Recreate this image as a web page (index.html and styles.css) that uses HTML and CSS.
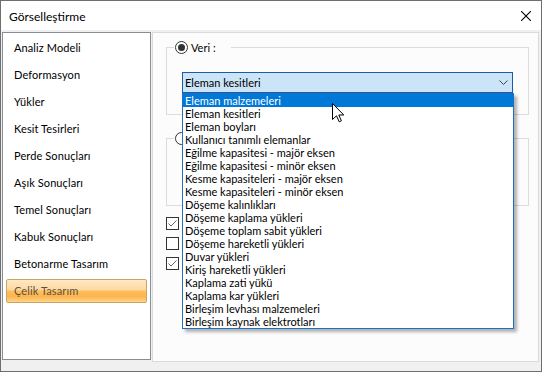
FILE: index.html
```html
<!DOCTYPE html>
<html lang="tr">
<head>
<meta charset="utf-8">
<title>Görselleştirme</title>
<link rel="stylesheet" href="styles.css">
</head>
<body>
<div class="window">
  <div class="titlebar">
    <span class="title">Görselleştirme</span>
    <svg class="close" width="10" height="10" viewBox="0 0 10 10"><path d="M0 0 L10 10 M10 0 L0 10" stroke="#000" stroke-width="1.1" fill="none"/></svg>
  </div>
  <div class="body">
    <ul class="nav">
      <li class="nav-item">Analiz Modeli</li>
      <li class="nav-item">Deformasyon</li>
      <li class="nav-item">Yükler</li>
      <li class="nav-item">Kesit Tesirleri</li>
      <li class="nav-item">Perde Sonuçları</li>
      <li class="nav-item">Aşık Sonuçları</li>
      <li class="nav-item">Temel Sonuçları</li>
      <li class="nav-item">Kabuk Sonuçları</li>
      <li class="nav-item">Betonarme Tasarım</li>
      <li class="nav-item active">Çelik Tasarım</li>
    </ul>
    <div class="page">
      <div class="group group-data">
        <div class="legend">
          <span class="radio checked"></span>
          <span class="legend-text">Veri :</span>
        </div>
        <div class="combo">
          <span class="combo-text">Eleman kesitleri</span>
          <svg class="chevron" width="9" height="5" viewBox="0 0 9 5"><polyline points="0.5,0.5 4.5,4.5 8.5,0.5" fill="none" stroke="#444" stroke-width="1"/></svg>
          <ul class="dropdown">
            <li class="opt selected">Eleman malzemeleri</li>
            <li class="opt">Eleman kesitleri</li>
            <li class="opt">Eleman boyları</li>
            <li class="opt">Kullanıcı tanımlı elemanlar</li>
            <li class="opt">Eğilme kapasitesi - majör eksen</li>
            <li class="opt">Eğilme kapasitesi - minör eksen</li>
            <li class="opt">Kesme kapasiteleri - majör eksen</li>
            <li class="opt">Kesme kapasiteleri - minör eksen</li>
            <li class="opt">Döşeme kalınlıkları</li>
            <li class="opt">Döşeme kaplama yükleri</li>
            <li class="opt">Döşeme toplam sabit yükleri</li>
            <li class="opt">Döşeme hareketli yükleri</li>
            <li class="opt">Duvar yükleri</li>
            <li class="opt">Kiriş hareketli yükleri</li>
            <li class="opt">Kaplama zati yükü</li>
            <li class="opt">Kaplama kar yükleri</li>
            <li class="opt">Birleşim levhası malzemeleri</li>
            <li class="opt">Birleşim kaynak elektrotları</li>
          </ul>
        </div>
      </div>
      <div class="group group-other">
        <div class="legend">
          <span class="radio"></span>
        </div>
      </div>
      <div class="checks">
        <span class="check"><svg width="11" height="11" viewBox="0 0 11 11"><polyline points="1.5,5.5 4,8 9.5,2.5" fill="none" stroke="#666" stroke-width="1"/></svg></span>
        <span class="check"></span>
        <span class="check"><svg width="11" height="11" viewBox="0 0 11 11"><polyline points="1.5,5.5 4,8 9.5,2.5" fill="none" stroke="#666" stroke-width="1"/></svg></span>
      </div>
      <svg class="cursor" width="13" height="20" viewBox="0 0 13 20"><path d="M0.5 0.5 L0.5 16.5 L4.5 12.8 L7.2 18.8 L9.4 17.8 L6.8 12 L11.8 12 Z" fill="#fff" stroke="#000" stroke-width="1" stroke-linejoin="miter"/></svg>
    </div>
  </div>
</div>
</body>
</html>
```

FILE: styles.css
```css
* { box-sizing: border-box; }
html, body { margin: 0; padding: 0; }
body {
  width: 542px;
  height: 372px;
  font-family: Lato, "Liberation Sans", Arial, sans-serif;
  font-size: 11px;
  color: #000;
  background: #f0f0f0;
}
.window {
  width: 542px;
  height: 372px;
  border: 1px solid #6e6e6e;
  background: #f0f0f0;
  display: flex;
  flex-direction: column;
}
.titlebar {
  height: 29px;
  background: #fff;
  display: flex;
  align-items: center;
  justify-content: space-between;
  padding: 1px 10px 0 8px;
  flex: none;
}
.title { font-size: 12px; }
.close { display: block; margin-top: -1px; }
.body {
  flex: 1;
  display: flex;
  align-items: flex-start;
  gap: 1px;
  padding: 2px 2px 0 1px;
}
.nav {
  list-style: none;
  margin: 0;
  padding: 3px 3px 0 3px;
  width: 149px;
  height: 328px;
  background: #fff;
  border: 1px solid #8a8d92;
  display: flex;
  flex-direction: column;
  gap: 3px;
}
.nav-item {
  height: 24px;
  line-height: 22px;
  padding-left: 7px;
  border: 1px solid transparent;
  color: #000;
  font-size: 11px;
  letter-spacing: 0.1px;
}
.nav-item.active {
  border-color: #c9a664;
  border-radius: 2px;
  color: #5e5040;
  background: linear-gradient(to bottom, #ffe8c4 0%, #fed9a0 45%, #fdbf5c 50%, #fdb550 75%, #ffd488 100%);
}
.page {
  position: relative;
  width: 387px;
  height: 330px;
  background: #fcfcfc;
  border: 1px solid #dadada;
  padding: 14px 9px 0 13px;
}
.group {
  position: relative;
  height: 68px;
  border: 1px solid #dcdcdc;
}
.group-other { margin-top: 23px; }
.legend {
  position: absolute;
  top: -7px;
  left: 7px;
  width: 57px;
  height: 13px;
  display: flex;
  align-items: center;
  gap: 3px;
  padding-left: 1px;
  background: #fcfcfc;
}
.group-other .legend { width: 30px; }
.radio {
  width: 13px;
  height: 13px;
  border: 1px solid #333;
  border-radius: 50%;
  background: #fff;
  display: flex;
  align-items: center;
  justify-content: center;
  flex: none;
}
.radio.checked::after {
  content: "";
  width: 7px;
  height: 7px;
  border-radius: 50%;
  background: #333;
}
.legend-text { line-height: 13px; }
.combo {
  position: absolute;
  top: 24px;
  left: 15px;
  width: 331px;
  height: 21px;
  border: 1px solid #1a5ca8;
  background: #cce4f7;
  display: flex;
  align-items: center;
  justify-content: space-between;
  padding: 0 4px 0 2px;
}
.combo-text { line-height: 14px; }
.chevron { display: block; }
.dropdown {
  position: absolute;
  top: 20px;
  left: -1px;
  width: 332px;
  margin: 0;
  padding: 0;
  list-style: none;
  background: #fff;
  border: 1px solid #1f6fc5;
  box-shadow: 3px 3px 3px rgba(0, 0, 0, 0.3);
  z-index: 2;
}
.opt {
  height: 13px;
  line-height: 13px;
  padding-left: 2px;
  white-space: nowrap;
}
.opt.selected {
  background: #0078d7;
  color: #fff;
}
.checks {
  margin-top: 11px;
  display: flex;
  flex-direction: column;
  gap: 7px;
}
.check {
  width: 13px;
  height: 13px;
  border: 1px solid #333;
  background: #fff;
  display: flex;
  align-items: center;
  justify-content: center;
}
.check svg { display: block; }
.cursor {
  position: absolute;
  left: 179px;
  top: 70px;
  z-index: 3;
}
```
